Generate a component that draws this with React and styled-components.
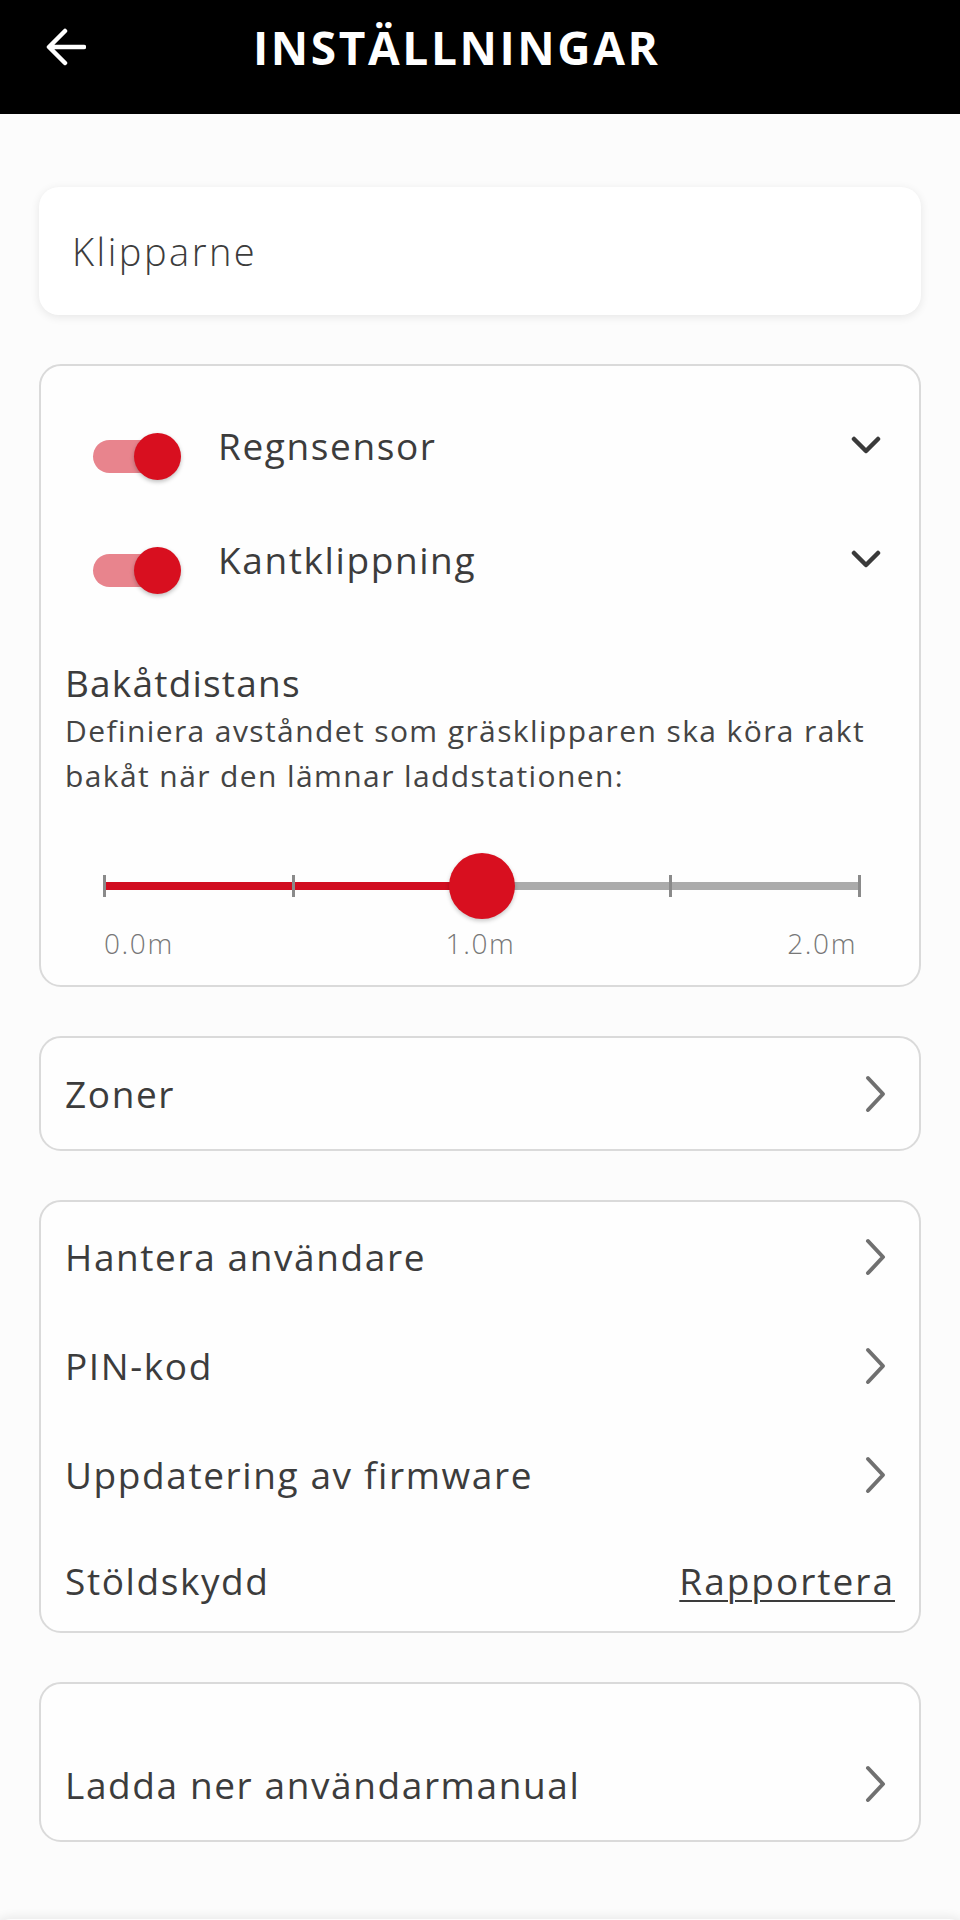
import React from "react";
import styled, { createGlobalStyle } from "styled-components";

const GlobalStyle = createGlobalStyle`
  * {
    box-sizing: border-box;
  }

  body {
    margin: 0;
    background: #fcfcfc;
    font-family: "Open Sans", "Liberation Sans", sans-serif;
    color: #3c3c3c;
  }
`;

const Page = styled.div`
  width: 960px;
  height: 1920px;
  overflow: hidden;
  background: #fcfcfc;
`;

const Header = styled.header`
  display: flex;
  align-items: center;
  height: 114px;
  padding: 0 0 20px 46px;
  background: #000;
`;

const BackButton = styled.button`
  display: flex;
  padding: 0;
  border: 0;
  background: none;
  cursor: pointer;
`;

const Title = styled.h1`
  margin: 0 0 0 167px;
  color: #fff;
  font-size: 46px;
  font-weight: 700;
  letter-spacing: 2.6px;
`;

const Content = styled.main`
  display: flex;
  flex-direction: column;
  gap: 49px;
  padding: 73px 39px 0;
`;

const NameCard = styled.div`
  display: flex;
  align-items: center;
  height: 128px;
  padding-left: 33px;
  border-radius: 20px;
  background: #fff;
  box-shadow: 0 2px 10px rgba(0, 0, 0, 0.09);
  font-size: 38px;
  font-weight: 300;
  letter-spacing: 2.5px;
`;

const Card = styled.section`
  display: flex;
  flex-direction: column;
  padding: ${p => p.pad || "0 24px"};
  border: 2px solid #dadada;
  border-radius: 22px;
  background: #fefefe;
`;

const ToggleRow = styled.div`
  display: flex;
  align-items: center;
  height: 100px;
  padding-left: 28px;
  & + & {
    margin-top: 14px;
  }
`;

const Switch = styled.div`
  position: relative;
  flex: none;
  width: 88px;
  height: 47px;
  margin-top: 22px;
`;

const SwitchTrack = styled.div`
  position: absolute;
  left: 0;
  top: 7px;
  width: 76px;
  height: 33px;
  border-radius: 17px;
  background: #e8848d;
`;

const SwitchThumb = styled.div`
  position: absolute;
  right: 0;
  top: 0;
  width: 47px;
  height: 47px;
  border-radius: 50%;
  background: #d80f1f;
  box-shadow: 0 2px 4px rgba(0, 0, 0, 0.25);
`;

const RowLabel = styled.span`
  flex: 1;
  margin-left: ${p => p.indent || 0}px;
  font-size: 37px;
  font-weight: 400;
  letter-spacing: 1.6px;
  color: #3c3c3c;
`;

const SectionTitle = styled.h2`
  margin: 51px 0 0;
  font-size: 37px;
  font-weight: 400;
  line-height: 46px;
  letter-spacing: 1.2px;
  color: #3c3c3c;
`;

const Description = styled.p`
  margin: 2px 0 0;
  font-size: 30px;
  font-weight: 400;
  line-height: 45px;
  letter-spacing: 1.4px;
  color: #444;
`;

const SliderWrap = styled.div`
  position: relative;
  height: 66px;
  margin: 55px 22px 0 39px;
`;

const Track = styled.div`
  position: absolute;
  left: 0;
  right: 0;
  top: 29px;
  height: 8px;
  background: #ababab;
`;

const TrackFill = styled.div`
  position: absolute;
  left: 0;
  top: 29px;
  height: 8px;
  background: #d10d20;
`;

const Tick = styled.div`
  position: absolute;
  top: 22px;
  width: 3px;
  height: 22px;
  margin-left: -1px;
  background: #8a8a8a;
`;

const Thumb = styled.div`
  position: absolute;
  top: 0;
  width: 66px;
  height: 66px;
  margin-left: -33px;
  border-radius: 50%;
  background: #d80f1f;
  box-shadow: 0 2px 4px rgba(0, 0, 0, 0.22);
`;

const Scale = styled.div`
  display: flex;
  justify-content: space-between;
  margin: 9px 24px 27px 39px;
  font-size: 28px;
  line-height: 30px;
  font-weight: 300;
  letter-spacing: 1.6px;
  color: #777;
`;

const LinkRow = styled.div`
  display: flex;
  align-items: center;
  height: ${p => p.h || 109}px;
`;

const ReportLink = styled.a`
  font-size: 37px;
  letter-spacing: 2px;
  color: #3c3c3c;
  text-decoration: underline;
  text-decoration-thickness: 2px;
  text-underline-offset: 5px;
  margin-right: -8px;
`;

const BottomBar = styled.div`
  height: 60px;
  margin: 77px -9px 0;
  border-radius: 20px 20px 0 0;
  background: #fdfdfd;
  box-shadow: 0 -3px 10px rgba(0, 0, 0, 0.07);
`;

const ArrowLeft = () => (
  <svg width="40" height="38" viewBox="0 0 40 38" fill="none">
    <path
      d="M38 19H4M19 3L3 19l16 16"
      stroke="#fff"
      strokeWidth="4.5"
      strokeLinecap="round"
      strokeLinejoin="round"
    />
  </svg>
);

const ChevronDown = () => (
  <svg width="30" height="20" viewBox="0 0 30 20" fill="none">
    <path
      d="M3 4l12 12L27 4"
      stroke="#3a3a3a"
      strokeWidth="4.5"
      strokeLinecap="round"
      strokeLinejoin="round"
    />
  </svg>
);

const ChevronRight = () => (
  <svg width="22" height="38" viewBox="0 0 22 38" fill="none">
    <path
      d="M3 3l15 16L3 35"
      stroke="#707070"
      strokeWidth="4"
      strokeLinecap="round"
      strokeLinejoin="round"
    />
  </svg>
);

const Toggle = () => (
  <Switch>
    <SwitchTrack />
    <SwitchThumb />
  </Switch>
);

const ticks = [0, 25, 50, 75, 100];

function DistanceSlider({ value }) {
  return (
    <>
      <SliderWrap>
        <Track />
        <TrackFill style={{ width: `${value}%` }} />
        {ticks.map(t => (
          <Tick key={t} style={{ left: `${t}%` }} />
        ))}
        <Thumb style={{ left: `${value}%` }} />
      </SliderWrap>
      <Scale>
        <span>0.0m</span>
        <span>1.0m</span>
        <span>2.0m</span>
      </Scale>
    </>
  );
}

const menu = ["Hantera användare", "PIN-kod", "Uppdatering av firmware"];

function App() {
  return (
    <Page>
      <GlobalStyle />
      <Header>
        <BackButton>
          <ArrowLeft />
        </BackButton>
        <Title>INSTÄLLNINGAR</Title>
      </Header>
      <Content>
        <NameCard>Klipparne</NameCard>

        <Card pad="29px 38px 0 24px">
          <ToggleRow>
            <Toggle />
            <RowLabel indent={37}>Regnsensor</RowLabel>
            <ChevronDown />
          </ToggleRow>
          <ToggleRow>
            <Toggle />
            <RowLabel indent={37}>Kantklippning</RowLabel>
            <ChevronDown />
          </ToggleRow>
          <SectionTitle>Bakåtdistans</SectionTitle>
          <Description>
            Definiera avståndet som gräsklipparen ska köra rakt bakåt när den
            lämnar laddstationen:
          </Description>
          <DistanceSlider value={50} />
        </Card>

        <Card pad="0 32px 0 24px">
          <LinkRow h={111}>
            <RowLabel>Zoner</RowLabel>
            <ChevronRight />
          </LinkRow>
        </Card>

        <Card pad="0 32px 0 24px">
          {menu.map(item => (
            <LinkRow key={item}>
              <RowLabel>{item}</RowLabel>
              <ChevronRight />
            </LinkRow>
          ))}
          <LinkRow h={102}>
            <RowLabel>Stöldskydd</RowLabel>
            <ReportLink>Rapportera</ReportLink>
          </LinkRow>
        </Card>

        <Card pad="44px 32px 0 24px">
          <LinkRow h={112}>
            <RowLabel>Ladda ner användarmanual</RowLabel>
            <ChevronRight />
          </LinkRow>
        </Card>
      </Content>
      <BottomBar />
    </Page>
  );
}

export default App;
